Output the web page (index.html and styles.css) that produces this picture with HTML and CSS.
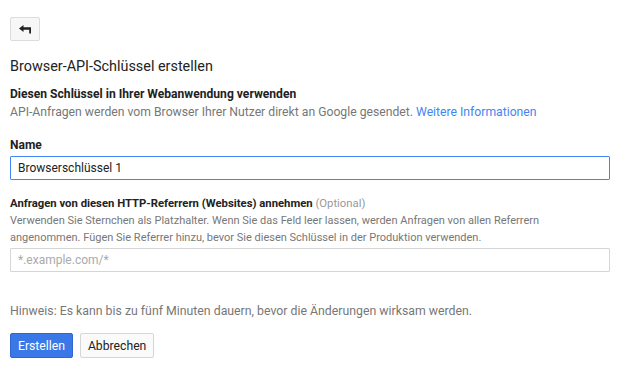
FILE: index.html
```html
<!DOCTYPE html>
<html lang="de">
<head>
<meta charset="utf-8">
<link rel="stylesheet" href="styles.css">
</head>
<body>
<div class="page">
  <button class="back" type="button" aria-label="Zurück">
    <svg width="13" height="9" viewBox="0 0 13 9"><path d="M0 3.5 L4.5 0 V2.3 H12 V8.5 H10.2 V4.7 H4.5 V7 Z" fill="#222"/></svg>
  </button>
  <h1 class="title">Browser-API-Schlüssel erstellen</h1>
  <div class="section">
    <div class="strong">Diesen Schlüssel in Ihrer Webanwendung verwenden</div>
    <div class="muted">API-Anfragen werden vom Browser Ihrer Nutzer direkt an Google gesendet. <a class="link" href="#">Weitere Informationen</a></div>
  </div>
  <div class="field">
    <label class="label">Name</label>
    <input class="input focus" type="text" value="Browserschlüssel 1">
  </div>
  <div class="field2">
    <label class="label">Anfragen von diesen HTTP-Referrern (Websites) annehmen <span class="opt">(Optional)</span></label>
    <div class="help">Verwenden Sie Sternchen als Platzhalter. Wenn Sie das Feld leer lassen, werden Anfragen von allen Referrern angenommen. Fügen Sie Referrer hinzu, bevor Sie diesen Schlüssel in der Produktion verwenden.</div>
    <input class="input" type="text" placeholder="*.example.com/*">
  </div>
  <p class="note">Hinweis: Es kann bis zu fünf Minuten dauern, bevor die Änderungen wirksam werden.</p>
  <div class="actions">
    <button class="btn primary" type="button">Erstellen</button>
    <button class="btn" type="button">Abbrechen</button>
  </div>
</div>
</body>
</html>
```
FILE: styles.css
```css
* { box-sizing: border-box; }
html, body { margin: 0; background: #fff; }
body { font-family: Roboto, "Noto Sans", sans-serif; color: #222; }
.page { padding: 17px 10px 0 10px; width: 620px; }
.back {
  display: flex; align-items: center; justify-content: center;
  width: 30px; height: 24px; padding: 0;
  background: #f7f7f7; border: 1px solid #dcdcdc; border-radius: 2px;
}
.title { font-size: 14.4px; font-weight: 400; margin: 16px 0 0 0; line-height: 20px; color: #222; }
.section { margin-top: 8px; line-height: 18px; }
.strong { font-weight: 700; color: #222; font-size: 12.1px; }
.muted { color: #777; font-size: 12.2px; }
.link { color: #4285f4; text-decoration: none; }
.field { margin-top: 16px; }
.label { display: block; font-size: 11.3px; font-weight: 700; line-height: 16px; margin-bottom: 3px; color: #222; }
.field .label { font-size: 12px; }
.input {
  display: block; width: 600px; height: 24px;
  border: 1px solid #d5d5d5; border-radius: 1px;
  font-family: Roboto, sans-serif; font-size: 12px; padding: 0 7px; color: #222; outline: none;
}
.input.focus { border-color: #4285f4; }
.input::placeholder { color: #aaa; }
.field2 { margin-top: 16px; }
.field2 .label { margin-bottom: 0; }
.opt { font-weight: 400; color: #999; }
.help { font-size: 11px; color: #777; line-height: 17px; margin-bottom: 2px; width: 560px; }
.note { font-size: 12.3px; color: #777; margin: 30px 0 0 0; line-height: 18px; }
.actions { display: flex; gap: 7px; margin-top: 13px; }
.btn {
  height: 25px; padding: 0 7px; font-family: Roboto, sans-serif; font-size: 12.2px;
  background: #fafafa; color: #222; border: 1px solid #d6d6d6; border-radius: 2px;
}
.btn.primary { background: #3b78e7; border-color: #2f66cf; color: #fff; }
```
